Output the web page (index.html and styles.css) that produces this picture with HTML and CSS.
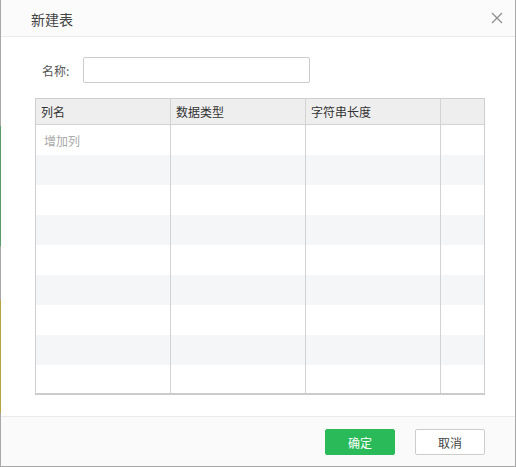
FILE: index.html
```html
<!DOCTYPE html>
<html lang="zh">
<head>
<meta charset="utf-8">
<title>新建表</title>
<link rel="stylesheet" href="styles.css">
</head>
<body>
<div class="frame">
  <div class="edge">
    <div class="seg gray s1"></div>
    <div class="seg green s2"></div>
    <div class="seg gray s3"></div>
    <div class="seg olive s4"></div>
    <div class="seg gray s5"></div>
  </div>
  <div class="dialog">
    <div class="head">
      <span class="title">新建表</span>
      <svg class="close" width="12" height="12" viewBox="0 0 12 12"><path d="M1 1L11 11M11 1L1 11" stroke="#8c8c8c" stroke-width="1.2" fill="none"/></svg>
    </div>
    <div class="content">
      <div class="name-row">
        <label class="label">名称:</label>
        <input class="input" type="text">
      </div>
      <div class="grid">
        <div class="row hdr">
          <div class="cell">列名</div>
          <div class="cell">数据类型</div>
          <div class="cell">字符串长度</div>
          <div class="cell last"></div>
        </div>
        <div class="rows">
          <div class="row"><div class="cell add">增加列</div><div class="cell"></div><div class="cell"></div><div class="cell last"></div></div>
          <div class="row alt"><div class="cell"></div><div class="cell"></div><div class="cell"></div><div class="cell last"></div></div>
          <div class="row"><div class="cell"></div><div class="cell"></div><div class="cell"></div><div class="cell last"></div></div>
          <div class="row alt"><div class="cell"></div><div class="cell"></div><div class="cell"></div><div class="cell last"></div></div>
          <div class="row"><div class="cell"></div><div class="cell"></div><div class="cell"></div><div class="cell last"></div></div>
          <div class="row alt"><div class="cell"></div><div class="cell"></div><div class="cell"></div><div class="cell last"></div></div>
          <div class="row"><div class="cell"></div><div class="cell"></div><div class="cell"></div><div class="cell last"></div></div>
          <div class="row alt"><div class="cell"></div><div class="cell"></div><div class="cell"></div><div class="cell last"></div></div>
          <div class="row"><div class="cell"></div><div class="cell"></div><div class="cell"></div><div class="cell last"></div></div>
        </div>
      </div>
    </div>
    <div class="foot">
      <button class="btn primary">确定</button>
      <button class="btn">取消</button>
    </div>
  </div>
</div>
</body>
</html>
```
FILE: styles.css
```css
html, body {
  margin: 0;
  padding: 0;
  background: #ffffff;
}
body {
  font-family: "Noto Sans CJK SC", "Noto Sans", sans-serif;
  color: #333333;
}
.frame {
  display: flex;
  width: 516px;
  height: 467px;
}
.edge {
  width: 1px;
  display: flex;
  flex-direction: column;
}
.seg.gray { background: #a8a8a8; }
.seg.green { background: #5b9b6b; }
.seg.olive { background: #b9a444; }
.s1 { height: 126px; }
.s2 { height: 120px; }
.s3 { height: 54px; }
.s4 { height: 113px; }
.s5 { flex: 1; }
.dialog {
  flex: 1;
  display: flex;
  flex-direction: column;
  border-right: 1px solid #a8a8a8;
  border-bottom: 1px solid #a8a8a8;
  background: #ffffff;
}
.head {
  height: 36px;
  flex: none;
  background: #fbfbfb;
  border-bottom: 1px solid #ebebeb;
  display: flex;
  align-items: center;
  justify-content: space-between;
  padding: 0 12px 0 30px;
}
.title {
  font-size: 14px;
  color: #444444;
  line-height: 20px;
  margin-top: 1px;
}
.close {
  display: block;
}
.content {
  flex: 1;
  padding: 20px 30px 0 34px;
}
.name-row {
  display: flex;
  align-items: center;
  height: 26px;
}
.label {
  font-size: 12px;
  color: #555555;
  padding-left: 7px;
  width: 41px;
}
.input {
  box-sizing: border-box;
  width: 227px;
  height: 26px;
  margin: 0;
  border: 1px solid #cccccc;
  border-radius: 2px;
  background: #ffffff;
  padding: 0 6px;
}
.grid {
  margin-top: 15px;
  width: 450px;
  box-sizing: border-box;
  border: 1px solid #cfcfcf;
  border-bottom: 2px solid #cbcbcb;
}
.row {
  display: grid;
  grid-template-columns: 135px 135px 135px 1fr;
  height: 30px;
}
.row.alt {
  background: #f5f6f8;
}
.row.hdr {
  height: 25px;
  background: #eeeeee;
  border-bottom: 1px solid #d3d3d3;
}
.rows {
  height: 268px;
  overflow: hidden;
}
.cell {
  border-right: 1px solid #d3d3d3;
  font-size: 12px;
  line-height: 25px;
  padding-left: 5px;
  color: #333333;
}
.cell.last {
  border-right: none;
}
.cell.add {
  color: #aaaaaa;
  line-height: 32px;
  padding-left: 8px;
}
.foot {
  height: 49px;
  flex: none;
  background: #fafafa;
  border-top: 1px solid #ebebeb;
  display: flex;
  align-items: center;
  justify-content: flex-end;
  gap: 20px;
  padding-right: 30px;
}
.btn {
  width: 70px;
  height: 26px;
  margin: 0;
  padding: 0;
  border: 1px solid #cccccc;
  border-radius: 2px;
  background: #ffffff;
  color: #444444;
  font-family: "Noto Sans CJK SC", "Noto Sans", sans-serif;
  font-size: 12px;
  margin-top: 1px;
}
.btn.primary {
  background: #2aba5a;
  border-color: #2aba5a;
  color: #ffffff;
}
```
